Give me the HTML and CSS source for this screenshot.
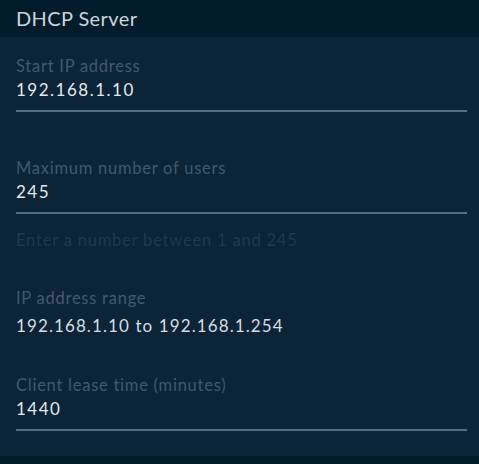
FILE: index.html
```html
<!DOCTYPE html>
<html lang="en">
<head>
    <meta charset="UTF-8">
    <meta name="viewport" content="width=device-width, initial-scale=1.0">
    <title>DHCP Server</title>
    <link rel="stylesheet" href="styles.css">
</head>
<body>
    <header class="page-header">DHCP Server</header>

    <main class="settings">
        <div class="field field-start">
            <label class="field-label" for="startIp">Start IP address</label>
            <input class="field-input" id="startIp" type="text" value="192.168.1.10">
        </div>

        <div class="field field-max">
            <label class="field-label" for="maxUsers">Maximum number of users</label>
            <input class="field-input" id="maxUsers" type="text" value="245">
        </div>
        <p class="field-hint">Enter a number between 1 and 245</p>

        <div class="field field-range">
            <span class="field-label">IP address range</span>
            <span class="field-text">192.168.1.10 to 192.168.1.254</span>
        </div>

        <div class="field field-lease">
            <label class="field-label" for="leaseTime">Client lease time (minutes)</label>
            <input class="field-input" id="leaseTime" type="text" value="1440">
        </div>
    </main>

    <footer class="page-footer"></footer>
</body>
</html>
```

FILE: styles.css
```css
body {
    margin: 0;
    background-color: #0b2437;
    font-family: Lato, "Open Sans", sans-serif;
    color: #e8eef2;
}

.page-header {
    height: 37px;
    box-sizing: border-box;
    padding: 6px 16px 0;
    background-color: #021c2c;
    font-size: 20px;
    line-height: 24px;
    letter-spacing: 0.4px;
    color: #ccd5db;
}

.settings {
    display: flex;
    flex-direction: column;
    padding: 0 12px 25px 16px;
}

.field {
    display: flex;
    flex-direction: column;
}

.field-label {
    font-size: 16.5px;
    line-height: 24px;
    letter-spacing: 0.75px;
    color: #45586a;
}

.field-input {
    margin: 0;
    padding: 0 0 8px;
    border: none;
    border-bottom: 2px solid #5a6d7c;
    background: transparent;
    font-family: inherit;
    font-size: 17px;
    line-height: 24px;
    letter-spacing: 1.5px;
    color: #e3e9ed;
    outline: none;
}

.field-text {
    font-size: 17px;
    line-height: 24px;
    letter-spacing: 1.1px;
    color: #d6dee3;
}

.field-start {
    padding-top: 17px;
}

.field-max {
    padding-top: 44px;
}

.field-hint {
    margin: 14px 0 0;
    font-size: 16.5px;
    line-height: 24px;
    letter-spacing: 0.8px;
    color: #243849;
}

.field-range {
    padding-top: 34px;
    gap: 4px;
}

.field-lease {
    padding-top: 35px;
}

.page-footer {
    height: 8px;
    background-color: #041b2a;
}
```
